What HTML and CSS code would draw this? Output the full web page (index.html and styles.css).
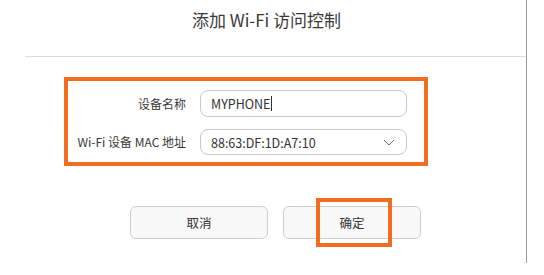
FILE: index.html
```html
<!DOCTYPE html>
<html lang="zh-CN">
<head>
<meta charset="utf-8">
<link rel="stylesheet" href="styles.css">
</head>
<body>
<div class="dialog">
  <div class="header"><h1 class="title">添加 Wi-Fi 访问控制</h1></div>
  <div class="form">
    <label class="label">设备名称</label>
    <div class="field"><span class="value">MYPHONE</span><span class="caret"></span></div>
    <label class="label">Wi-Fi 设备 MAC 地址</label>
    <div class="field select"><span class="value">88:63:DF:1D:A7:10</span>
      <svg class="chev" width="12" height="7" viewBox="0 0 12 7"><path d="M1 1 L6 6 L11 1" fill="none" stroke="#666" stroke-width="1"/></svg>
    </div>
  </div>
  <div class="actions">
    <button class="btn">取消</button>
    <button class="btn ok">确定<span class="mark"></span></button>
  </div>
</div>
</body>
</html>
```
FILE: styles.css
```css
* { box-sizing: border-box; }
html, body { margin: 0; padding: 0; background: #fff; }
body { font-family: "Noto Sans CJK SC", "Noto Sans", sans-serif; color: #333; width: 544px; height: 275px; overflow: hidden; }
.dialog { width: 527px; height: 263px; border-right: 1px solid #9c9c9c; }
.header { margin-left: 25px; padding-right: 18px; height: 57px; border-bottom: 1px solid #dedede; display: flex; justify-content: center; align-items: flex-start; }
.title { margin: 8px 0 0; font-size: 17px; font-weight: normal; color: #3a3a3a; line-height: 24px; }
.form { margin: 20px 0 0 64px; width: 364px; height: 89px; border: 4px solid #f06d22; display: grid; grid-template-columns: 118px 207px; grid-template-rows: 27px 26px; column-gap: 14px; row-gap: 12px; padding-top: 9px; align-items: center; }
.label { font-size: 12px; text-align: right; color: #3a3a3a; line-height: 16px; }
.field { height: 100%; border: 1px solid #c9c9c9; border-radius: 8px; display: flex; align-items: center; padding-left: 10px; font-size: 12.5px; color: #333; }
.caret { display: inline-block; width: 1px; height: 15px; background: #333; margin-left: 1px; }
.select { justify-content: space-between; padding-right: 11px; }
.chev { display: block; }
.actions { display: flex; gap: 15px; margin: 40px 0 0 130px; }
.btn { position: relative; width: 138px; height: 33px; border: 1px solid #cfcfcf; border-radius: 6px; background: #f8f8f8; font-family: inherit; font-size: 12.5px; color: #333; padding: 0; }
.mark { position: absolute; left: 32px; top: -9px; width: 76px; height: 49px; border: 4px solid #f06d22; }
```
